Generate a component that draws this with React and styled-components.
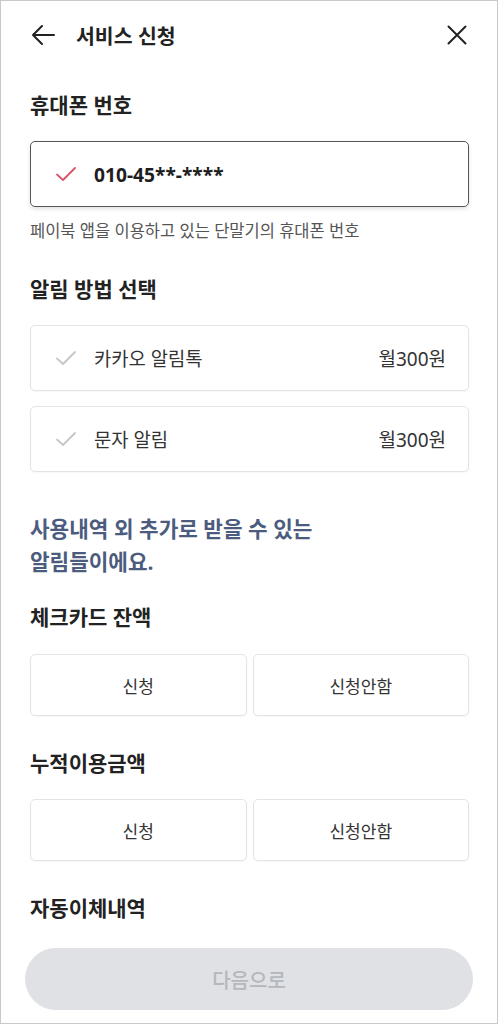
import React from 'react';
import styled, { createGlobalStyle } from 'styled-components';

const GlobalStyle = createGlobalStyle`
  html, body {
    margin: 0;
    padding: 0;
    background: #ffffff;
  }
  body {
    font-family: "Noto Sans", "Noto Sans CJK KR", sans-serif;
    color: #222222;
  }
  * {
    box-sizing: border-box;
  }
`;

const Frame = styled.div`
  width: 498px;
  height: 1024px;
  border: 1px solid #c9c9c9;
  background: #ffffff;
  display: flex;
  flex-direction: column;
  overflow: hidden;
`;

const Header = styled.header`
  height: 67px;
  display: flex;
  align-items: center;
  padding: 0 28px 0 30px;

  .title {
    margin-left: 21px;
    font-size: 20.5px;
    font-weight: 700;
    color: #222222;
    flex: 1;
  }
`;

const IconButton = styled.button`
  border: 0;
  background: none;
  padding: 0;
  width: 24px;
  height: 24px;
  display: flex;
  align-items: center;
  justify-content: center;
  color: #222222;
  cursor: pointer;
`;

const Content = styled.main`
  padding: 0 28px 0 29px;
  display: flex;
  flex-direction: column;
`;

const Heading = styled.h2`
  margin: ${({ $top }) => $top}px 0 0;
  font-size: 21px;
  line-height: 28px;
  font-weight: 700;
  color: #222222;
`;

const PhoneBox = styled.div`
  margin-top: 22px;
  height: 66px;
  border: 1px solid #555555;
  border-radius: 5px;
  box-shadow: 0 2px 4px rgba(0, 0, 0, 0.12);
  display: flex;
  align-items: center;
  padding-left: 24px;

  .number {
    margin-left: 17px;
    font-size: 19.2px;
    font-weight: 700;
    color: #1e1e1e;
  }
`;

const Helper = styled.p`
  margin: 13px 0 0;
  font-size: 16.5px;
  line-height: 22px;
  color: #555555;
`;

const OptionList = styled.div`
  margin-top: 22px;
  display: flex;
  flex-direction: column;
  gap: 15px;
`;

const OptionCard = styled.button`
  height: 66px;
  border: 1px solid #e4e4e4;
  border-radius: 5px;
  background: #ffffff;
  box-shadow: 0 1px 2px rgba(0, 0, 0, 0.04);
  display: flex;
  align-items: center;
  padding: 0 22px 0 24px;
  font-family: inherit;
  cursor: pointer;

  .label {
    margin-left: 17px;
    flex: 1;
    text-align: left;
    font-size: 18.8px;
    color: #333333;
  }

  .price {
    font-size: 19px;
    color: #333333;
  }
`;

const Notice = styled.p`
  margin: 40px 0 0;
  font-size: 21.3px;
  line-height: 33px;
  font-weight: 700;
  color: #4b5c7e;
`;

const ChoiceRow = styled.div`
  margin-top: ${({ $top }) => $top}px;
  display: grid;
  grid-template-columns: 1fr 1fr;
  gap: 6px;
`;

const ChoiceButton = styled.button`
  height: 62px;
  border: 1px solid #e4e4e4;
  border-radius: 5px;
  background: #ffffff;
  box-shadow: 0 1px 2px rgba(0, 0, 0, 0.04);
  font-family: inherit;
  font-size: 17px;
  color: #333333;
  cursor: pointer;
`;

const Footer = styled.div`
  margin-top: 26px;
  padding: 0 24px;
`;

const NextButton = styled.button`
  width: 100%;
  height: 62px;
  border: 0;
  border-radius: 31px;
  background: #dfe1e5;
  color: #b4b7bc;
  font-family: inherit;
  font-size: 20px;
  font-weight: 500;
`;

const Check = ({ color }) => (
  <svg width="22" height="16" viewBox="0 0 22 16" fill="none">
    <path d="M2 8.5 L8 14 L20 2" stroke={color} strokeWidth="1.8" strokeLinecap="round" strokeLinejoin="round" />
  </svg>
);

const options = [
  { label: '카카오 알림톡', price: '월300원' },
  { label: '문자 알림', price: '월300원' },
];

const App = () => (
  <>
    <GlobalStyle />
    <Frame>
      <Header>
        <IconButton aria-label="뒤로">
          <svg width="24" height="22" viewBox="0 0 24 22" fill="none">
            <path d="M23 11 H2 M11 2 L2 11 L11 20" stroke="#222" strokeWidth="2" strokeLinecap="round" strokeLinejoin="round" />
          </svg>
        </IconButton>
        <span className="title">서비스 신청</span>
        <IconButton aria-label="닫기">
          <svg width="20" height="20" viewBox="0 0 20 20" fill="none">
            <path d="M1.5 1.5 L18.5 18.5 M18.5 1.5 L1.5 18.5" stroke="#222" strokeWidth="2" strokeLinecap="round" />
          </svg>
        </IconButton>
      </Header>
      <Content>
        <Heading $top={23}>휴대폰 번호</Heading>
        <PhoneBox>
          <Check color="#d9546a" />
          <span className="number">010-45**-****</span>
        </PhoneBox>
        <Helper>페이북 앱을 이용하고 있는 단말기의 휴대폰 번호</Helper>

        <Heading $top={33}>알림 방법 선택</Heading>
        <OptionList>
          {options.map((o) => (
            <OptionCard key={o.label}>
              <Check color="#c6c6c6" />
              <span className="label">{o.label}</span>
              <span className="price">{o.price}</span>
            </OptionCard>
          ))}
        </OptionList>

        <Notice>
          사용내역 외 추가로 받을 수 있는
          <br />
          알림들이에요.
        </Notice>

        <Heading $top={25}>체크카드 잔액</Heading>
        <ChoiceRow $top={23}>
          <ChoiceButton>신청</ChoiceButton>
          <ChoiceButton>신청안함</ChoiceButton>
        </ChoiceRow>

        <Heading $top={33}>누적이용금액</Heading>
        <ChoiceRow $top={22}>
          <ChoiceButton>신청</ChoiceButton>
          <ChoiceButton>신청안함</ChoiceButton>
        </ChoiceRow>

        <Heading $top={33}>자동이체내역</Heading>
      </Content>
      <Footer>
        <NextButton disabled>다음으로</NextButton>
      </Footer>
    </Frame>
  </>
);

export default App;
